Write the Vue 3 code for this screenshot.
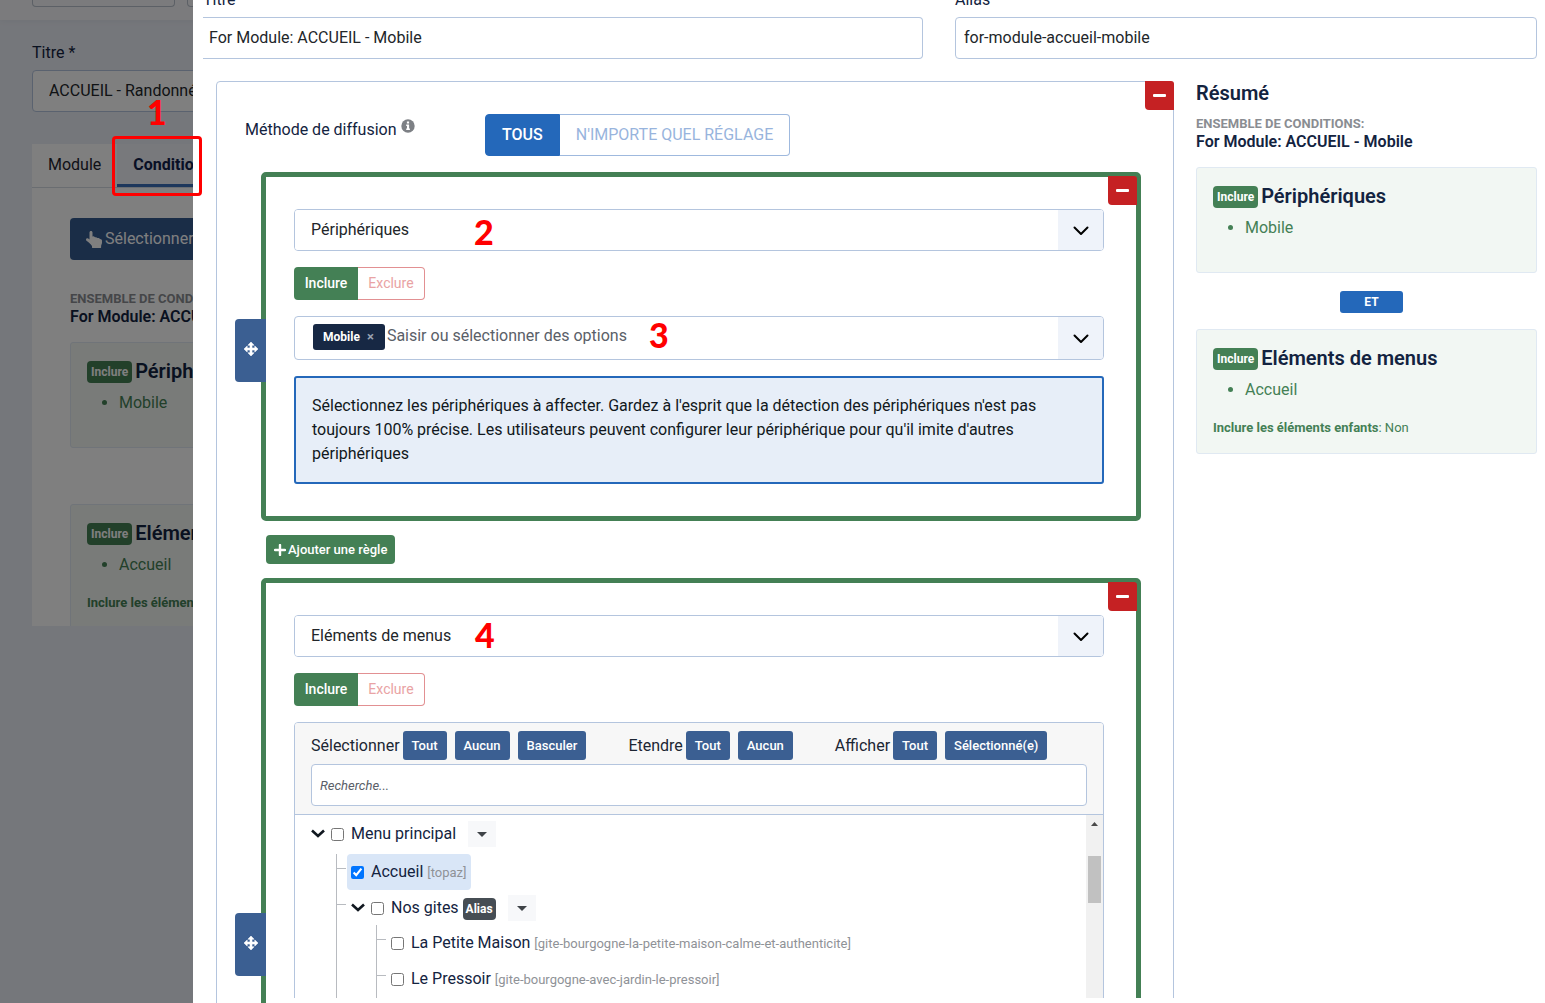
<script setup>
import { ref } from 'vue'

const title = ref('For Module: ACCUEIL - Mobile')
const alias = ref('for-module-accueil-mobile')
const search = ref('')
const firstRule = ref('Périphériques')
const secondRule = ref('Eléments de menus')
const ruleTypes = ['Périphériques', 'Eléments de menus']

const summary = [
  { name: 'Périphériques', value: 'Mobile', note: false },
  { name: 'Eléments de menus', value: 'Accueil', note: true },
]

const toolGroups = [
  { label: 'Sélectionner', actions: ['Tout', 'Aucun', 'Basculer'] },
  { label: 'Etendre', actions: ['Tout', 'Aucun'] },
  { label: 'Afficher', actions: ['Tout', 'Sélectionné(e)'] },
]

const subItems = [
  { id: 'maison', label: 'La Petite Maison', slug: '[gite-bourgogne-la-petite-maison-calme-et-authenticite]' },
  { id: 'pressoir', label: 'Le Pressoir', slug: '[gite-bourgogne-avec-jardin-le-pressoir]' },
]
</script>

<template>
  <div class="page">
    <div class="behind">
      <div class="behind-page">
        <div class="topbar"><span class="topbar-box"></span><span class="topbar-box"></span></div>
        <div class="behind-title">
          <label for="module-title">Titre *</label>
          <input id="module-title" class="field" value="ACCUEIL - Randonnées" />
        </div>
        <div class="behind-card">
          <nav class="tabs">
            <a href="#module" class="tab">Module</a>
            <a href="#conditions" class="tab active">Conditions</a>
          </nav>
          <div class="tab-body">
            <button class="pick" type="button">
              <svg width="16" height="17" viewBox="0 0 16 17" aria-hidden="true">
                <path fill="currentColor" d="M3.500 1.500C3.500.7 4.100 0 5 0s1.500.7 1.500 1.500v4.300c.3-.3.8-.5 1.300-.4.6.1 1 .4 1.200.9.9-.4 2-.1 2.400.8.9-.4 2.100 0 2.500.9 1.100-.2 2.100.6 2.100 1.800v2c0 1.200-.7 2-.9 3.200v1.500c0 .3-.2.5-.5.5H6.500c-.3 0-.5-.2-.5-.5v-1.600C4.600 13.500 2.700 11 .8 10.100c-1.500-.8-.8-2.900.8-2.800.8.1 1.300.6 1.900 1.200z" />
              </svg>
              Sélectionner
            </button>
            <p class="set-label">Ensemble de conditions:</p>
            <p class="set-name">For Module: ACCUEIL - Mobile</p>
            <template v-for="(item, i) in summary" :key="item.name">
              <div v-if="i > 0" class="joiner"><span class="et">ET</span></div>
              <section class="condition">
                <h3><span class="badge">Inclure</span> {{ item.name }}</h3>
                <ul><li>{{ item.value }}</li></ul>
                <p v-if="item.note"><b>Inclure les éléments enfants</b>: Non</p>
              </section>
            </template>
          </div>
        </div>
      </div>
      <div class="dim"></div>
    </div>

    <main class="modal">
      <div class="identity">
        <div>
          <label for="set-title">Titre</label>
          <input id="set-title" v-model="title" class="field cut" />
        </div>
        <div>
          <label for="set-alias">Alias</label>
          <input id="set-alias" v-model="alias" class="field narrow" />
        </div>
      </div>

      <div class="columns">
        <section class="group">
          <button class="remove" type="button" aria-label="Supprimer le groupe">
            <svg width="13" height="3" viewBox="0 0 13 3"><rect width="13" height="3" rx="1" fill="#fff" /></svg>
          </button>
          <div class="method">
            <div class="method-label">
              Méthode de diffusion
              <svg width="14" height="14" viewBox="0 0 14 14" aria-hidden="true">
                <circle cx="7" cy="7" r="6.700" fill="#7d8085" />
                <path fill="#fff" d="M5.900 2.500h2.200v2H5.900zM5.200 5.500h2.900v4h.8v1.400H5.200V9.500H6V6.900h-.8z" />
              </svg>
            </div>
            <div class="switch">
              <button type="button" class="on" aria-pressed="true">TOUS</button>
              <button type="button" aria-pressed="false">N'IMPORTE QUEL RÉGLAGE</button>
            </div>
          </div>

          <div class="rules">
            <article class="rule">
              <button class="remove" type="button" aria-label="Supprimer la règle">
                <svg width="13" height="3" viewBox="0 0 13 3"><rect width="13" height="3" rx="1" fill="#fff" /></svg>
              </button>
              <button class="handle" type="button" aria-label="Déplacer">
                <svg width="14" height="14" viewBox="0 0 14 14"><path fill="#fff" d="M7 0l3 3.200H8v2.800h2.800V4L14 7l-3.200 3V8H8v2.800h2L7 14l-3-3.200h2V8H3.200v2L0 7l3.200-3v2H6V3.200H4z" stroke="#fff" stroke-width=".6" stroke-linejoin="round" /></svg>
              </button>
              <div class="select">
                <select v-model="firstRule" aria-label="Type de règle">
                  <option v-for="t in ruleTypes" :key="t">{{ t }}</option>
                </select>
                <span class="arrow"><svg width="16" height="10" viewBox="0 0 16 10"><path d="M1.500 1.500L8 8l6.500-6.500" fill="none" stroke="#000" stroke-width="2" stroke-linecap="round" stroke-linejoin="round" /></svg></span>
              </div>
              <div class="toggle">
                <button type="button" class="yes" aria-pressed="true">Inclure</button>
                <button type="button" class="no" aria-pressed="false">Exclure</button>
              </div>
              <div class="choices">
                <span class="chip">Mobile <button type="button" aria-label="Retirer Mobile">×</button></span>
                <input type="text" placeholder="Saisir ou sélectionner des options" aria-label="Options" />
                <span class="arrow"><svg width="16" height="10" viewBox="0 0 16 10"><path d="M1.500 1.500L8 8l6.500-6.500" fill="none" stroke="#000" stroke-width="2" stroke-linecap="round" stroke-linejoin="round" /></svg></span>
              </div>
              <p class="info">Sélectionnez les périphériques à affecter. Gardez à l'esprit que la détection des périphériques n'est pas toujours 100% précise. Les utilisateurs peuvent configurer leur périphérique pour qu'il imite d'autres périphériques</p>
            </article>

            <button type="button" class="add">
              <svg width="12" height="12" viewBox="0 0 12 12" aria-hidden="true"><path d="M6 1v10M1 6h10" stroke="#fff" stroke-width="2.400" stroke-linecap="round" /></svg>
              Ajouter une règle
            </button>

            <article class="rule">
              <button class="remove" type="button" aria-label="Supprimer la règle">
                <svg width="13" height="3" viewBox="0 0 13 3"><rect width="13" height="3" rx="1" fill="#fff" /></svg>
              </button>
              <button class="handle" type="button" aria-label="Déplacer">
                <svg width="14" height="14" viewBox="0 0 14 14"><path fill="#fff" d="M7 0l3 3.200H8v2.800h2.800V4L14 7l-3.200 3V8H8v2.800h2L7 14l-3-3.200h2V8H3.200v2L0 7l3.200-3v2H6V3.200H4z" stroke="#fff" stroke-width=".6" stroke-linejoin="round" /></svg>
              </button>
              <div class="select">
                <select v-model="secondRule" aria-label="Type de règle">
                  <option v-for="t in ruleTypes" :key="t">{{ t }}</option>
                </select>
                <span class="arrow"><svg width="16" height="10" viewBox="0 0 16 10"><path d="M1.500 1.500L8 8l6.500-6.500" fill="none" stroke="#000" stroke-width="2" stroke-linecap="round" stroke-linejoin="round" /></svg></span>
              </div>
              <div class="toggle">
                <button type="button" class="yes" aria-pressed="true">Inclure</button>
                <button type="button" class="no" aria-pressed="false">Exclure</button>
              </div>
              <div class="picker">
                <div class="picker-head">
                  <div class="tools">
                    <div v-for="g in toolGroups" :key="g.label" class="tool-group">
                      <span>{{ g.label }}</span>
                      <div class="actions">
                        <button v-for="a in g.actions" :key="a" type="button">{{ a }}</button>
                      </div>
                    </div>
                  </div>
                  <input v-model="search" class="search" type="text" placeholder="Recherche..." aria-label="Recherche" />
                </div>
                <div class="tree-box">
                  <div class="tree">
                    <div class="row">
                      <svg class="fold" width="14" height="10" viewBox="0 0 14 10"><path d="M1 1.500l6 5.500 6-5.500" fill="none" stroke="#111820" stroke-width="2.600" /></svg>
                      <input id="menu-main" type="checkbox" /><label for="menu-main">Menu principal</label>
                      <button type="button" class="more" aria-label="Plus"><svg width="10" height="5" viewBox="0 0 10 5"><path d="M0 0h10L5 5z" fill="#3f4348" /></svg></button>
                    </div>
                    <ul class="branch">
                      <li>
                        <div class="row leaf">
                          <div class="picked">
                            <input id="menu-home" type="checkbox" checked /><label for="menu-home">Accueil <small>[topaz]</small></label>
                          </div>
                        </div>
                      </li>
                      <li>
                        <div class="row leaf">
                          <div class="item">
                            <svg class="fold" width="14" height="10" viewBox="0 0 14 10"><path d="M1 1.500l6 5.500 6-5.500" fill="none" stroke="#111820" stroke-width="2.600" /></svg>
                            <input id="menu-gites" type="checkbox" /><label for="menu-gites">Nos gites <span class="badge dark">Alias</span></label>
                            <button type="button" class="more" aria-label="Plus"><svg width="10" height="5" viewBox="0 0 10 5"><path d="M0 0h10L5 5z" fill="#3f4348" /></svg></button>
                          </div>
                        </div>
                        <ul class="branch inner">
                          <li v-for="s in subItems" :key="s.id">
                            <div class="row leaf">
                              <div class="item">
                                <input :id="s.id" type="checkbox" /><label :for="s.id">{{ s.label }} <small>{{ s.slug }}</small></label>
                              </div>
                            </div>
                          </li>
                        </ul>
                      </li>
                    </ul>
                  </div>
                  <div class="scrollbar">
                    <svg width="7" height="4" viewBox="0 0 7 4"><path d="M0 4L3.500 0 7 4z" fill="#4a4a4a" /></svg>
                    <div class="thumb"></div>
                  </div>
                </div>
              </div>
            </article>
          </div>
        </section>

        <aside class="resume">
          <h2>Résumé</h2>
          <p class="set-label">Ensemble de conditions:</p>
          <p class="set-name">For Module: ACCUEIL - Mobile</p>
          <template v-for="(item, i) in summary" :key="item.name">
            <div v-if="i > 0" class="joiner"><span class="et">ET</span></div>
            <section class="condition">
              <h3><span class="badge">Inclure</span> {{ item.name }}</h3>
              <ul><li>{{ item.value }}</li></ul>
              <p v-if="item.note"><b>Inclure les éléments enfants</b>: Non</p>
            </section>
          </template>
        </aside>
      </div>
      <div class="edge"></div>
    </main>

    <div class="mark-box"></div>
    <span class="mark one">1</span>
    <span class="mark two">2</span>
    <span class="mark three">3</span>
    <span class="mark four">4</span>
  </div>
</template>

<style>
body { margin: 0; overflow: hidden; }
</style>

<style scoped>
.page, .page * { box-sizing: border-box; }
.page {
  position: relative;
  display: flex;
  height: 100vh;
  overflow: hidden;
  background: #fff;
  color: #132340;
  font: 400 16px/24px Roboto, "Liberation Sans", sans-serif;
}
button, input, select { font: inherit; color: inherit; margin: 0; }
button { border: 0; padding: 0; cursor: pointer; white-space: nowrap; }
p, h2, h3, ul { margin: 0; padding: 0; }
svg { display: block; flex: none; }
label { white-space: nowrap; }

.field {
  display: block;
  width: 100%;
  height: 42px;
  padding: 0 16px 2px;
  border: 1px solid #b4c5de;
  border-radius: 4px;
  background: #fff;
  color: #22262a;
}

/* Page under the modal */
.behind { position: relative; flex: none; width: 193px; overflow: hidden; background: #ebeef6; }
.behind-page { width: 900px; }
.dim { position: absolute; inset: 0; background: rgba(0, 0, 0, .5); }
.topbar {
  display: flex;
  gap: 12px;
  height: 20px;
  padding-left: 32px;
  background: #f6f7fa;
  box-shadow: 0 1px 5px #dfe4ed;
}
.topbar-box { width: 143px; height: 7px; border: 1px solid #b9c0cc; border-top: 0; border-radius: 0 0 4px 4px; }
.behind-title { padding: 21px 0 0 32px; }
.behind-title label { display: block; margin-bottom: 5px; }
.behind-card { height: 482px; margin: 32px 0 0 32px; overflow: hidden; background: #fefefe; }
.tabs { display: flex; height: 44px; border-bottom: 1px solid #d5dae2; }
.tab { padding: 9px 16px 7px; color: #1e2430; text-decoration: none; }
.tab.active { border-bottom: 3px solid #3b6eb8; background: #f0f2f8; font-weight: 700; color: #10204a; }
.tab-body { width: 420px; padding: 30px 38px; }
.pick {
  display: flex;
  align-items: center;
  gap: 3px;
  width: 160px;
  height: 42px;
  margin-bottom: 30px;
  padding-left: 16px;
  border-radius: 4px;
  background: #345a8f;
  color: #fff;
}

/* Summary pieces, used on both sides */
.set-label { font-size: 13px; line-height: 18px; font-weight: 700; text-transform: uppercase; color: #8a8d92; }
.set-name { margin-bottom: 16px; line-height: 18px; font-weight: 600; }
.condition { padding: 16px; border: 1px solid #e0e9f2; border-radius: 3px; background: #f2f7f3; color: #448055; }
.condition h3 { display: flex; align-items: flex-end; gap: 3px; margin-bottom: 8px; font-size: 20px; line-height: 24px; font-weight: 600; color: #132340; }
.condition ul { margin-bottom: 16px; padding-left: 32px; }
.condition p { font-size: 13px; line-height: 19px; }
.badge {
  display: inline-block;
  padding: 0 4px;
  border-radius: 4px;
  background: #448055;
  color: #fff;
  font-size: 12px;
  line-height: 22px;
  font-weight: 700;
}
.badge.dark { padding: 0 3px; background: #464d54; }
.joiner { display: flex; justify-content: center; padding: 18px 0 16px 10px; }
.et { width: 63px; border-radius: 3px; background: #2468ba; color: #fff; font-size: 12px; line-height: 22px; font-weight: 700; text-align: center; }

/* Modal */
.modal { position: relative; flex: 1; min-width: 0; padding: 0 8px 0 10px; overflow: hidden; background: #fff; }
.identity { display: grid; grid-template-columns: 720fr 582fr; gap: 32px; margin-top: -12px; }
.identity label { display: block; margin-bottom: 5px; line-height: 24px; }
.field.cut { padding-left: 6px; border-left: 0; border-radius: 0 4px 4px 0; }
.field.narrow { padding: 0 8px 2px; }
.columns { display: grid; grid-template-columns: minmax(0, 1fr) 341px; gap: 22px; margin: 22px 0 0 13px; }
.group { position: relative; padding: 32px 32px 32px 28px; border: 1px solid #b4c5de; border-radius: 4px; }
.remove {
  position: absolute;
  top: -1px;
  right: -1px;
  display: flex;
  align-items: center;
  justify-content: center;
  width: 29px;
  height: 29px;
  border-radius: 0 3px 0 4px;
  background: #c52123;
}
.method { display: flex; margin-bottom: 16px; }
.method-label { display: flex; gap: 4px; width: 240px; padding-top: 4px; white-space: nowrap; }
.method-label svg { margin-top: 1px; }
.switch { display: flex; height: 42px; }
.switch button { padding: 0 16px; border: 1px solid #9fb9de; border-left: 0; border-radius: 0 4px 4px 0; background: #fff; color: #98b4dd; }
.switch .on { border: 1px solid #2468ba; border-radius: 4px 0 0 4px; background: #2468ba; color: #fff; font-weight: 500; }

.rules { margin-left: 16px; }
.rule { position: relative; padding: 32px 32px 32px 28px; border: 5px solid #448055; border-radius: 5px; }
.rule .select, .rule .toggle, .rule .choices { margin-bottom: 16px; }
.handle {
  position: absolute;
  left: -31px;
  top: calc(50% - 28px);
  display: flex;
  align-items: center;
  justify-content: center;
  width: 31px;
  height: 63px;
  padding-bottom: 3px;
  border-radius: 4px 0 0 4px;
  background: #3b5f92;
}
.select { position: relative; height: 42px; border: 1px solid #b4c5de; border-radius: 4px; overflow: hidden; }
.select select { display: block; width: 100%; height: 40px; padding: 0 60px 0 16px; border: 0; appearance: none; background: #fff; color: #22262a; }
.arrow {
  position: absolute;
  top: 0;
  right: 0;
  bottom: 0;
  display: flex;
  align-items: center;
  justify-content: center;
  width: 45px;
  padding-top: 2px;
  background: #eff3fa;
  pointer-events: none;
}
.toggle { display: flex; height: 33px; font-size: 14px; }
.toggle button { padding: 0 0 2px; }
.toggle .yes { width: 64px; border-radius: 4px 0 0 4px; background: #448055; color: #fff; font-weight: 500; }
.toggle .no { width: 67px; border: 1px solid #e29092; border-left: 0; border-radius: 0 4px 4px 0; background: #fff; color: #e9a3a4; }
.choices { position: relative; display: flex; align-items: flex-start; gap: 2px; height: 44px; padding: 7px 46px 0 18px; border: 1px solid #b4c5de; border-radius: 4px; overflow: hidden; }
.chip { display: flex; align-items: center; gap: 6px; height: 26px; padding: 0 10px; border-radius: 3px; background: #172844; color: #fff; font-size: 12px; font-weight: 700; }
.chip button { width: 9px; background: none; color: #9aa3b3; font-size: 13px; line-height: 20px; text-align: center; }
.choices input { flex: 1; min-width: 0; height: 24px; padding: 0; border: 0; background: none; }
.choices input::placeholder { color: #5a6068; opacity: 1; }
.info { padding: 16px; border: 2px solid #2468ba; border-radius: 3px; background: #e7eef8; color: #111820; }
.add { display: flex; align-items: center; gap: 2px; height: 29px; margin: 14px 0 14px 5px; padding: 0 8px; border-radius: 4px; background: #448055; color: #fff; font-size: 13px; font-weight: 500; }

.picker { border: 1px solid #b4c5de; border-radius: 4px; overflow: hidden; }
.picker-head { padding: 8px 16px; border-bottom: 1px solid #b4c5de; background: #f7f7f7; }
.tools { display: flex; gap: 42px; margin-bottom: 4px; }
.tool-group { display: flex; align-items: center; gap: 3px; color: #1c2633; }
.actions { display: flex; gap: 8px; }
.actions button { height: 29px; padding: 0 9px; border-radius: 3px; background: #3b5f92; color: #fff; font-size: 13px; font-weight: 500; }
.search { display: block; width: 100%; height: 42px; padding: 0 8px; border: 1px solid #b4c5de; border-radius: 4px; background: #fff; font-size: 13px; font-style: italic; }
.search::placeholder { color: #5a6068; opacity: 1; }
.tree-box { display: flex; height: 450px; }
.tree { flex: 1; min-width: 0; padding-top: 1px; overflow: hidden; }
.tree ul { list-style: none; }
.row, .item, .picked { display: flex; align-items: center; height: 36px; }
.tree > .row { padding-left: 16px; }
.fold { margin-right: 6px; }
.tree input { width: 13px; height: 13px; margin-right: 7px; }
.tree small { font-size: 13px; color: #8f9297; }
.more { display: flex; align-items: center; justify-content: center; width: 28px; height: 26px; margin-left: 12px; background: #f7f8fa; }
.branch { margin: 2px 0 0 41px; border-left: 1px solid #b8bbc0; }
.branch.inner { margin: -1px 0 0 39px; min-height: 400px; }
.leaf::before { content: ""; align-self: flex-start; width: 9px; height: 1px; margin: 14px 1px 0 0; background: #b8bbc0; }
.item, .picked { padding: 0 4px; }
.picked { border-radius: 4px; background: #d9e6f7; }
.scrollbar { display: flex; flex-direction: column; align-items: center; width: 17px; padding-top: 7px; background: #f1f1f1; }
.thumb { width: 13px; height: 47px; margin-top: 30px; background: #c1c1c1; }

.resume { min-width: 0; }
.resume h2 { margin-bottom: 10px; font-size: 20px; line-height: 24px; font-weight: 600; }
.edge { position: absolute; left: 73px; right: 0; bottom: 0; height: 5px; background: #fff; }

/* Numbered call-outs */
.mark-box { position: absolute; left: 112px; top: 136px; width: 90px; height: 60px; border: 3px solid #f00; border-radius: 4px; }
.mark { position: absolute; color: #f00; font: 900 34px/34px Lato, sans-serif; }
.one { left: 147px; top: 95px; }
.two { left: 474px; top: 215px; }
.three { left: 649px; top: 318px; }
.four { left: 475px; top: 618px; }
</style>
